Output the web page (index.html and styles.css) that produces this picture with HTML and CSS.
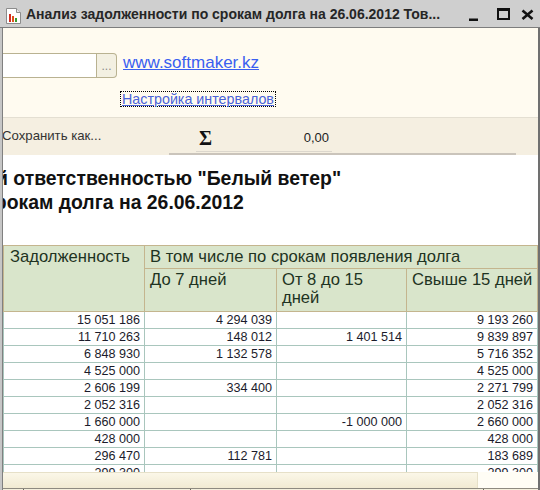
FILE: index.html
```html
<!DOCTYPE html>
<html lang="ru">
<head>
<meta charset="utf-8">
<title>Анализ задолженности</title>
<link rel="stylesheet" href="styles.css">
</head>
<body>
<div class="window">
  <div class="titlebar">
    <svg class="app-icon" viewBox="0 0 16 16" width="16" height="16">
      <path d="M0.5 0.5h10l4 4v11h-14z" fill="#fff" stroke="#8c8c8c"/>
      <path d="M10.5 0.5v4h4" fill="#e8e8e8" stroke="#8c8c8c"/>
      <rect x="3" y="6" width="2" height="8" fill="#d42a1e"/>
      <rect x="6" y="8" width="2" height="6" fill="#e0521c"/>
      <rect x="9" y="10" width="2" height="4" fill="#3a9a2c"/>
    </svg>
    <div class="title">Анализ задолженности по срокам долга на 26.06.2012 Тов...</div>
    <svg class="controls" viewBox="0 0 72 27" width="72" height="27">
      <rect x="1" y="18.5" width="9" height="2.5" fill="#111"/>
      <path d="M29 8h13v12h-13z M31 11h9v7h-9z" fill="#111" fill-rule="evenodd"/>
      <path d="M54.5 10.5L64.5 19M64.5 10.5L54.5 19" stroke="#111" stroke-width="2.6" fill="none"/>
    </svg>
  </div>
  <div class="frame">
    <div class="client">
      <div class="params">
        <div class="row1">
          <div class="field">
            <div class="field-input"></div>
            <div class="field-btn">...</div>
          </div>
          <a class="site">www.softmaker.kz</a>
        </div>
        <div class="row2">
          <a class="intervals">Настройка интервалов</a>
        </div>
      </div>
      <div class="toolbar">
        <div class="save">Сохранить как...</div>
        <div class="sum">
          <div class="sum-field">
            <span class="sigma">Σ</span>
            <span class="sum-val">0,00</span>
          </div>
        </div>
        <div class="tb-rest"></div>
      </div>
      <div class="sheet">
        <div class="report-title">
          <div class="line l1">й ответственностью "Белый ветер"</div>
          <div class="line l2">срокам долга на 26.06.2012</div>
        </div>
        <div class="grid">
          <div class="hc h-debt">Задолженность</div>
          <div class="hc h-group">В том числе по срокам появления долга</div>
          <div class="hc h-sub">До 7 дней</div>
          <div class="hc h-sub">От 8 до 15<br>дней</div>
          <div class="hc h-sub">Свыше 15 дней</div>

          <div class="c first">15 051 186</div><div class="c">4 294 039</div><div class="c"></div><div class="c">9 193 260</div>
          <div class="c first">11 710 263</div><div class="c">148 012</div><div class="c">1 401 514</div><div class="c">9 839 897</div>
          <div class="c first">6 848 930</div><div class="c">1 132 578</div><div class="c"></div><div class="c">5 716 352</div>
          <div class="c first">4 525 000</div><div class="c"></div><div class="c"></div><div class="c">4 525 000</div>
          <div class="c first">2 606 199</div><div class="c">334 400</div><div class="c"></div><div class="c">2 271 799</div>
          <div class="c first">2 052 316</div><div class="c"></div><div class="c"></div><div class="c">2 052 316</div>
          <div class="c first">1 660 000</div><div class="c"></div><div class="c">-1 000 000</div><div class="c">2 660 000</div>
          <div class="c first">428 000</div><div class="c"></div><div class="c"></div><div class="c">428 000</div>
          <div class="c first">296 470</div><div class="c">112 781</div><div class="c"></div><div class="c">183 689</div>
          <div class="c first">299 300</div><div class="c"></div><div class="c"></div><div class="c">299 300</div>
        </div>
      </div>
      <div class="hscroll">
        <div class="track"></div>
        <div class="corner"></div>
      </div>
      <div class="status">
        <span class="seg s1"></span><span class="seg s2"></span><span class="seg s3"></span>
      </div>
    </div>
  </div>
</div>
</body>
</html>
```

FILE: styles.css
```css
* { box-sizing: border-box; }
html, body { margin: 0; padding: 0; }
body {
  width: 540px;
  height: 490px;
  overflow: hidden;
  font-family: "Liberation Sans", Arial, sans-serif;
  background: #fffbf0;
}
.window { display: flex; flex-direction: column; height: 490px; }

.titlebar {
  height: 28px;
  flex: none;
  background: #cfcfcf;
  border-bottom: 1px solid #7d7d7d;
  display: flex;
  align-items: flex-start;
}
.app-icon { flex: none; margin: 8px 4px 0 6px; }
.title {
  font-weight: bold;
  font-size: 14px;
  line-height: 16px;
  color: #262626;
  padding-top: 6px;
  white-space: nowrap;
}
.controls { flex: none; margin-left: auto; }

.frame {
  flex: 1;
  min-height: 0;
  display: flex;
  border-left: 2px solid #c6c6c6;
}
.client {
  flex: 1;
  min-width: 0;
  display: flex;
  flex-direction: column;
  border-left: 1px solid #808080;
  border-right: 2px solid #707070;
  background: #fffbf0;
  overflow: hidden;
}

.params {
  height: 90px;
  flex: none;
  border-bottom: 1px solid #e4dfd2;
  padding-top: 25px;
}
.row1 { display: flex; height: 25px; }
.field { display: flex; width: 114px; height: 25px; flex: none; }
.field-input {
  width: 94px;
  background: #fff;
  border-top: 1px solid #b9b291;
  border-bottom: 1px solid #b9b291;
  border-right: 1px solid #b9b291;
}
.field-btn {
  width: 20px;
  background: #f3f0e2;
  border: 1px solid #b9b291;
  border-left: none;
  border-radius: 0 4px 4px 0;
  color: #8a8a8a;
  font-size: 12px;
  line-height: 14px;
  padding-top: 5px;
  text-align: center;
}
.site {
  align-self: flex-start;
  margin: 0 0 0 6px;
  font-size: 17px;
  line-height: 19px;
  color: #3a5ff0;
  text-decoration: underline;
  white-space: nowrap;
}
.row2 { margin-top: 12px; }
.intervals {
  display: inline-block;
  margin-left: 117px;
  height: 16px;
  padding: 0 1px;
  border: 1px dotted #000;
  font-size: 14.3px;
  line-height: 14px;
  color: #4a63d8;
  text-decoration: underline;
  white-space: nowrap;
}

.toolbar {
  height: 37px;
  flex: none;
  display: flex;
  background: #f5efe1;
}
.save {
  width: 167px;
  flex: none;
  margin-left: -1px;
  padding-top: 10px;
  font-size: 13.2px;
  line-height: 15px;
  color: #333;
  white-space: nowrap;
}
.sum {
  width: 347px;
  flex: none;
  border-bottom: 2px solid #cac4bb;
}
.sum-field {
  margin-left: 27px;
  width: 136px;
  height: 34px;
  border-bottom: 1px solid #dcd7cd;
  display: flex;
  align-items: flex-start;
  padding: 0 3px;
}
.sigma {
  margin-top: 10px;
  font-family: "Liberation Serif", "Times New Roman", serif;
  font-weight: bold;
  font-size: 20px;
  line-height: 20px;
  color: #111;
}
.sum-val {
  margin-left: auto;
  margin-top: 12px;
  font-size: 13px;
  line-height: 15px;
  color: #222;
}
.tb-rest { flex: 1; }

.sheet {
  height: 317px;
  flex: none;
  background: #fff;
  overflow: hidden;
}
.report-title { padding-top: 11px; }
.line {
  font-weight: bold;
  font-size: 19.4px;
  line-height: 24px;
  color: #111;
  white-space: nowrap;
}
.l1 { margin-left: -7px; }
.l2 { margin-left: -19px; }

.grid {
  margin-top: 31px;
  display: grid;
  grid-template-columns: 142px 132px 130px 131px;
  grid-template-rows: 24px 43px repeat(10, 17px);
}
.hc {
  background: #d9e5cb;
  border-right: 1px solid #c4b58e;
  border-bottom: 1px solid #c4b58e;
  color: #1e3322;
  font-size: 16.6px;
  line-height: 18px;
  padding: 2px 5px 0;
  white-space: nowrap;
}
.h-debt {
  grid-row: 1 / span 2;
  grid-column: 1;
  border-left: 1px solid #c4b58e;
  border-top: 1px solid #c4b58e;
  padding-left: 6px;
}
.h-group {
  grid-row: 1;
  grid-column: 2 / span 3;
  border-top: 1px solid #c4b58e;
}
.c {
  border-right: 1px solid #a9c6bd;
  border-bottom: 1px solid #a9c6bd;
  text-align: right;
  padding: 0 4px;
  font-size: 12.6px;
  line-height: 16px;
  color: #1b1b2b;
  white-space: nowrap;
}
.c.first { border-left: 1px solid #a9c6bd; }

.hscroll { height: 16px; flex: none; display: flex; }
.track {
  width: 475px;
  background: linear-gradient(#fbf7e8, #f1ead2);
  border-top: 1px solid #e6e0c8;
  border-right: 1px solid #e6e0c8;
}
.corner { flex: 1; background: #fffdf5; }

.status {
  height: 2px;
  flex: none;
  border-top: 1px solid #8e8a80;
  background: #f4efdc;
  display: flex;
}
.seg { height: 1px; border-right: 1px solid #6a665c; }
.s1 { width: 21px; }
.s2 { width: 167px; }
.s3 { width: 293px; }
```
